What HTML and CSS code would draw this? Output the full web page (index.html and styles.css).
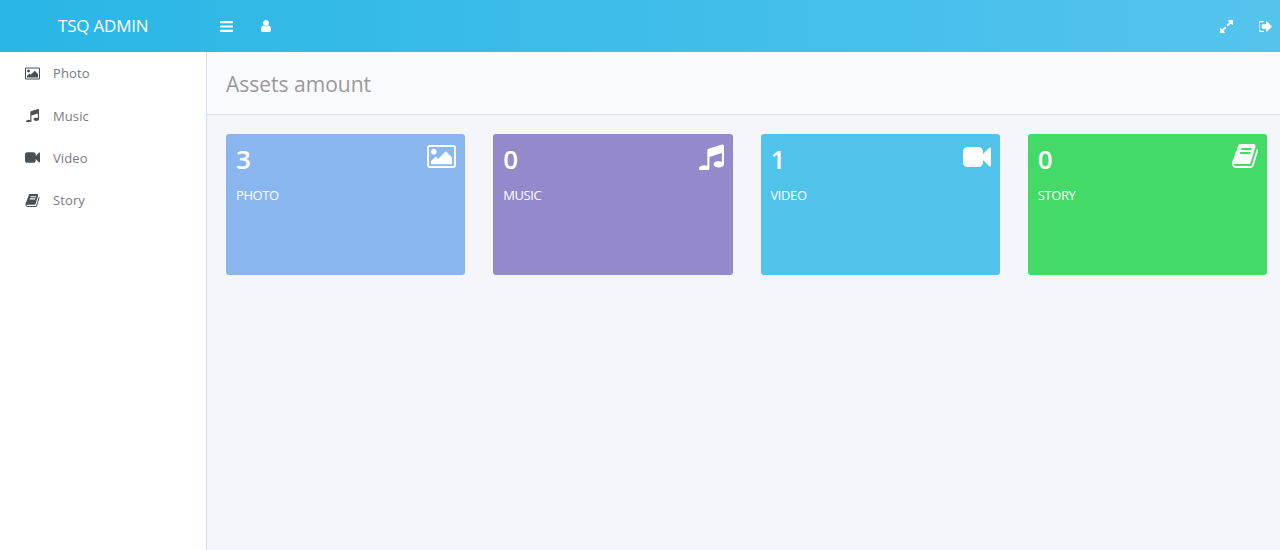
FILE: index.html
```html
<!DOCTYPE html>
<html lang="en">
<head>
  <meta charset="UTF-8" />
  <title>TSQ Admin</title>
  <link rel="stylesheet" href="styles.css">
</head>
<body>
  <!-- Icon sprite -->
  <svg class="sprite">
    <symbol id="i-photo" viewBox="-64 128 1920 1536"><path d="M576 576q0 80-56 136t-136 56-136-56-56-136 56-136 136-56 136 56 56 136zm1024 384v448h-1408v-192l320-320 160 160 512-512zm96-704h-1600q-13 0-22.5 9.5t-9.5 22.5v1216q0 13 9.5 22.5t22.5 9.5h1600q13 0 22.5-9.5t9.5-22.5v-1216q0-13-9.5-22.5t-22.5-9.5zm160 32v1216q0 66-47 113t-113 47h-1600q-66 0-113-47t-47-113v-1216q0-66 47-113t113-47h1600q66 0 113 47t47 113z"/></symbol>
    <symbol id="i-music" viewBox="128 128 1536 1536"><path d="M1664 224v1120q0 50-34 89t-86 60.5-103.5 32-96.5 10.5-96.5-10.5-103.5-32-86-60.5-34-89 34-89 86-60.5 103.5-32 96.5-10.5q105 0 192 39v-537l-768 237v709q0 50-34 89t-86 60.5-103.5 32-96.5 10.5-96.5-10.5-103.5-32-86-60.5-34-89 34-89 86-60.5 103.5-32 96.5-10.5q105 0 192 39v-967q0-31 19-56.5t49-35.5l832-256q12-4 28-4 40 0 68 28t28 68z"/></symbol>
    <symbol id="i-video" viewBox="0 256 1792 1280"><path d="M1792 352v1088q0 42-39 59-13 5-25 5-27 0-45-19l-403-403v166q0 119-84.5 203.5t-203.5 84.5h-704q-119 0-203.5-84.5t-84.5-203.5v-704q0-119 84.5-203.5t203.5-84.5h704q119 0 203.5 84.5t84.5 203.5v165l403-402q18-19 45-19 12 0 25 5 39 17 39 59z"/></symbol>
    <symbol id="i-story" viewBox="64 128 1664 1536"><path d="M1703 478q40 57 18 129l-275 906q-19 64-76.5 107.5t-122.5 43.5h-923q-77 0-148.5-53.5t-99.5-131.5q-24-67-2-127 0-4 3-27t4-37q1-8-3-21.5t-3-19.5q2-11 8-21t16.5-23.5 16.5-23.5q23-38 45-91.5t30-91.5q3-10 .5-30t-.5-28q3-11 17-28t17-23q21-36 42-92t25-90q1-9-2.5-32t.5-28q4-13 22-30.5t22-22.5q19-26 42.5-84.5t27.5-96.5q1-8-3-25.5t-2-26.5q2-8 9-18t18-23 17-21q8-12 16.5-30.5t15-35 16-36 19.5-32 26.5-23.5 36-11.5 47.5 5.5l-1 3q38-9 51-9h761q74 0 114 56t18 130l-274 906q-36 119-71.5 153.5t-128.5 34.5h-869q-27 0-38 15-11 16-1 43 24 70 144 70h923q29 0 56-15.5t35-41.5l300-987q7-22 5-57 38 15 59 43zm-1064 2q-4 13 2 22.5t20 9.5h608q13 0 25.5-9.5t16.5-22.5l21-64q4-13-2-22.5t-20-9.5h-608q-13 0-25.5 9.5t-16.5 22.5zm-83 256q-4 13 2 22.5t20 9.5h608q13 0 25.5-9.5t16.5-22.5l21-64q4-13-2-22.5t-20-9.5h-608q-13 0-25.5 9.5t-16.5 22.5z"/></symbol>
    <symbol id="i-bars" viewBox="128 256 1536 1280"><path d="M1664 1344v128q0 26-19 45t-45 19h-1408q-26 0-45-19t-19-45v-128q0-26 19-45t45-19h1408q26 0 45 19t19 45zm0-512v128q0 26-19 45t-45 19h-1408q-26 0-45-19t-19-45v-128q0-26 19-45t45-19h1408q26 0 45 19t19 45zm0-512v128q0 26-19 45t-45 19h-1408q-26 0-45-19t-19-45v-128q0-26 19-45t45-19h1408q26 0 45 19t19 45z"/></symbol>
    <symbol id="i-user" viewBox="256 128 1280 1536"><path d="M1536 1399q0 109-62.5 187t-150.5 78h-854q-88 0-150.5-78t-62.5-187q0-85 8.5-160.5t31.5-152 58.5-131 94-89 134.5-34.5q131 128 313 128t313-128q76 0 134.5 34.5t94 89 58.5 131 31.5 152 8.5 160.5zm-256-887q0 159-112.5 271.5t-271.5 112.5-271.5-112.5-112.5-271.5 112.5-271.5 271.5-112.5 271.5 112.5 112.5 271.5z"/></symbol>
    <symbol id="i-expand" viewBox="128 128 1536 1536"><path d="M883 1056q0 13-10 23l-332 332 144 144q19 19 19 45t-19 45-45 19h-448q-26 0-45-19t-19-45v-448q0-26 19-45t45-19 45 19l144 144 332-332q10-10 23-10t23 10l114 114q10 10 10 23zm781-864v448q0 26-19 45t-45 19-45-19l-144-144-332 332q-10 10-23 10t-23-10l-114-114q-10-10-10-23t10-23l332-332-144-144q-19-19-19-45t19-45 45-19h448q26 0 45 19t19 45z"/></symbol>
    <symbol id="i-signout" viewBox="128 256 1536 1280"><path d="M704 1440q0 4 1 20t.5 26.5-3 23.5-10 19.5-20.5 6.5h-320q-119 0-203.5-84.5t-84.5-203.5v-704q0-119 84.5-203.5t203.5-84.5h320q13 0 22.5 9.5t9.5 22.5q0 4 1 20t.5 26.5-3 23.5-10 19.5-20.5 6.5h-320q-66 0-113 47t-47 113v704q0 66 47 113t113 47h312l11.5 1 11.5 3 8 5.5 7 9 2 13.5zm928-544q0 26-19 45l-544 544q-19 19-45 19t-45-19-19-45v-288h-448q-26 0-45-19t-19-45v-384q0-26 19-45t45-19h448v-288q0-26 19-45t45-19 45 19l544 544q19 19 19 45z"/></symbol>
  </svg>

  <header class="topbar">
    <div class="brand">TSQ ADMIN</div>
    <nav class="top-left">
      <a href="#" class="top-link"><svg class="icon bars"><use href="#i-bars"/></svg></a>
      <a href="#" class="top-link"><svg class="icon user"><use href="#i-user"/></svg></a>
    </nav>
    <nav class="top-right">
      <a href="#" class="top-link"><svg class="icon expand"><use href="#i-expand"/></svg></a>
      <a href="#" class="top-link"><svg class="icon signout"><use href="#i-signout"/></svg></a>
    </nav>
  </header>

  <div class="layout">
    <aside class="sidebar">
      <ul>
        <li><a href="#"><span class="side-icon"><svg class="icon"><use href="#i-photo"/></svg></span>Photo</a></li>
        <li><a href="#"><span class="side-icon"><svg class="icon"><use href="#i-music"/></svg></span>Music</a></li>
        <li><a href="#"><span class="side-icon"><svg class="icon"><use href="#i-video"/></svg></span>Video</a></li>
        <li><a href="#"><span class="side-icon"><svg class="icon"><use href="#i-story"/></svg></span>Story</a></li>
      </ul>
    </aside>

    <main class="main">
      <div class="page-head">
        <h1>Assets amount</h1>
      </div>
      <div class="card-grid">
        <div class="card photo">
          <div class="card-top">
            <span class="count">3</span>
            <svg class="icon card-icon"><use href="#i-photo"/></svg>
          </div>
          <p class="label">PHOTO</p>
        </div>
        <div class="card music">
          <div class="card-top">
            <span class="count">0</span>
            <svg class="icon card-icon"><use href="#i-music"/></svg>
          </div>
          <p class="label">MUSIC</p>
        </div>
        <div class="card video">
          <div class="card-top">
            <span class="count">1</span>
            <svg class="icon card-icon"><use href="#i-video"/></svg>
          </div>
          <p class="label">VIDEO</p>
        </div>
        <div class="card story">
          <div class="card-top">
            <span class="count">0</span>
            <svg class="icon card-icon"><use href="#i-story"/></svg>
          </div>
          <p class="label">STORY</p>
        </div>
      </div>
    </main>
  </div>
</body>
</html>
```
FILE: styles.css
```css
* {
  margin: 0;
  padding: 0;
  box-sizing: border-box;
}

html, body {
  height: 100%;
  overflow: hidden;
}

body {
  display: flex;
  flex-direction: column;
  font-family: "Open Sans", sans-serif;
  background-color: #f4f6fb;
}

a {
  color: inherit;
  text-decoration: none;
}

.sprite {
  display: none;
}

.icon {
  display: block;
  fill: currentColor;
}

/* Top bar */
.topbar {
  display: flex;
  align-items: center;
  height: 52px;
  flex-shrink: 0;
  color: #fff;
  background: linear-gradient(to right, #29b6e6, #54c4ed);
}

.brand {
  width: 207px;
  padding-left: 58px;
  padding-bottom: 2px;
  font-size: 17px;
  letter-spacing: -0.2px;
}

.top-left,
.top-right {
  display: flex;
  align-items: center;
}

.top-left {
  gap: 28px;
  padding-left: 13px;
}

.top-right {
  gap: 26px;
  margin-left: auto;
  padding-right: 8px;
}

.bars { width: 13px; height: 11px; }
.user { width: 10px; height: 12px; }
.expand { width: 13px; height: 13px; }
.signout { width: 13px; height: 11px; }

/* Sidebar and main */
.layout {
  display: flex;
  flex: 1;
  min-height: 0;
}

.sidebar {
  width: 207px;
  flex-shrink: 0;
  background-color: #fff;
  border-right: 1px solid #d5dfeb;
}

.sidebar ul {
  list-style: none;
}

.sidebar li a {
  display: flex;
  align-items: center;
  height: 42.4px;
  padding-left: 25px;
  font-size: 13px;
  letter-spacing: 0.1px;
  color: #767c84;
}

.side-icon {
  display: flex;
  width: 28px;
  color: #4a4f55;
}

.side-icon .icon {
  width: 15px;
  height: 13px;
}

.main {
  flex: 1;
  min-width: 0;
}

.page-head {
  height: 63px;
  display: flex;
  align-items: center;
  padding-left: 19px;
  padding-top: 2px;
  background-color: #f9fafd;
  border-bottom: 1px solid #d3e2f0;
}

.page-head h1 {
  font-size: 21px;
  font-weight: 400;
  color: #999;
}

/* Cards */
.card-grid {
  display: grid;
  grid-template-columns: repeat(4, 1fr);
  gap: 28px;
  padding: 19px 13px 0 19px;
}

.card {
  height: 141px;
  padding: 10px;
  border-radius: 3px;
  color: #fff;
}

.photo { background-color: #8ab6f0; }
.music { background-color: #9389cb; }
.video { background-color: #4fc3ea; }
.story { background-color: #43da68; }

.card-top {
  display: flex;
  justify-content: space-between;
  align-items: flex-start;
}

.count {
  font-size: 26px;
  font-weight: 600;
  line-height: 30px;
}

.card-icon {
  margin-right: -1px;
}

.photo .card-icon { width: 29px; height: 23px; margin-top: 1px; }
.music .card-icon { width: 25px; height: 26px; }
.video .card-icon { width: 28px; height: 20px; margin-top: 3px; }
.story .card-icon { width: 26px; height: 24px; }

.label {
  margin-top: 12px;
  font-size: 13px;
  letter-spacing: -0.4px;
}
```
